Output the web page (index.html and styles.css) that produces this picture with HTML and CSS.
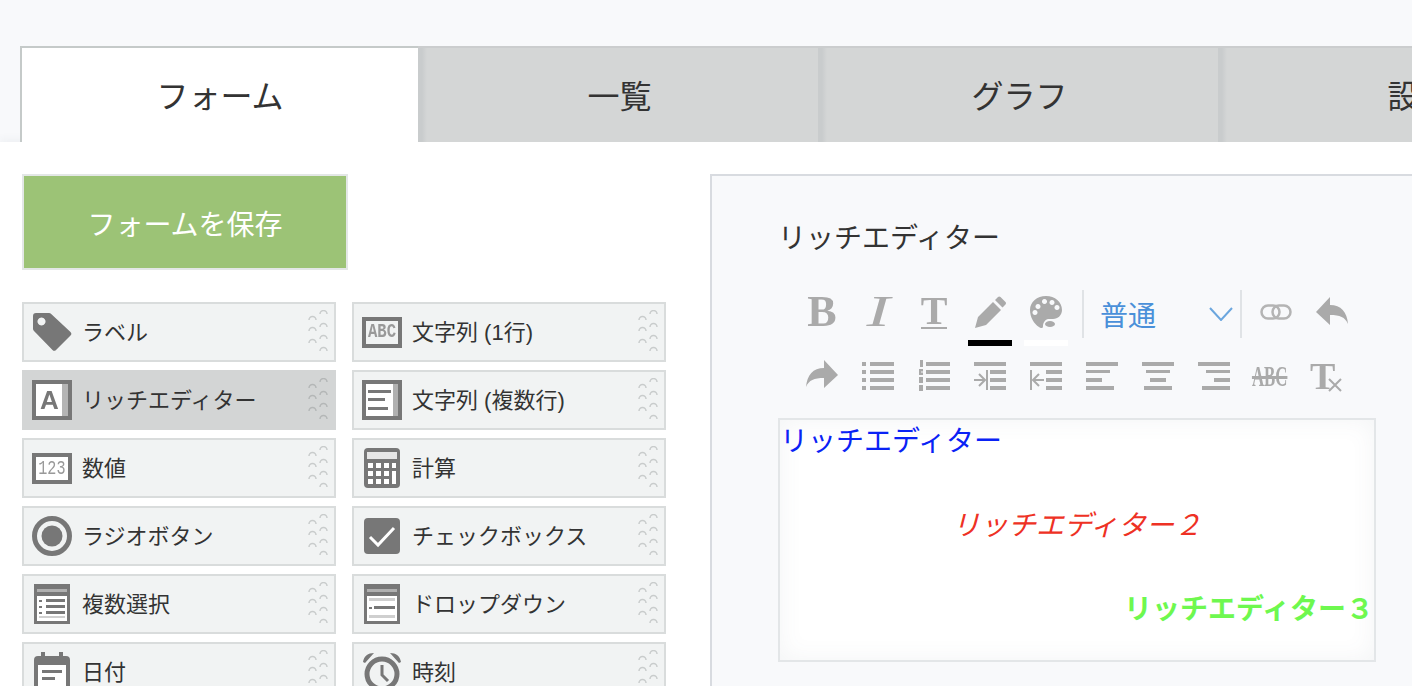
FILE: index.html
```html
<!DOCTYPE html>
<html lang="ja">
<head>
<meta charset="utf-8">
<title>フォーム</title>
<link rel="stylesheet" href="styles.css">
</head>
<body>
<svg class="defs" aria-hidden="true">
  <symbol id="grip" viewBox="0 0 20 44">
    <path d="M1 10a3.500 3.500 0 0 1 7 0M1 21a3.500 3.500 0 0 1 7 0M1 33a3.500 3.500 0 0 1 7 0M12 4a3.500 3.500 0 0 1 7 0M12 17a3.500 3.500 0 0 1 7 0M12 29a3.500 3.500 0 0 1 7 0M12 41a3.500 3.500 0 0 1 7 0"/>
  </symbol>
  <symbol id="tag" viewBox="0 0 40 40">
    <path fill-rule="evenodd" d="M4 1h13a3 3 0 0 1 2.200 1L38.500 20a2.500 2.500 0 0 1 0 3.500L24 38a2.500 2.500 0 0 1-3.500 0L2 19a3 3 0 0 1-1-2V4a3 3 0 0 1 3-3zM9.500 5.500a4 4 0 1 0 .01 0z"/>
  </symbol>
  <symbol id="lines" viewBox="0 0 40 40">
    <path d="M0 0h40v40H0z"/>
    <path class="w" d="M4 4h32v32H4z"/>
    <path class="m" d="M31 4h5v32h-5z"/>
    <path d="M6 10h23v3H6zM6 18h17v3H6zM6 27h20v3H6z"/>
  </symbol>
  <symbol id="calc" viewBox="0 0 40 40">
    <rect x="2" width="36" height="40" rx="4"/>
    <path class="s" d="M5 4h30v7H5z"/>
    <path class="w" d="M6 15h5v5H6zM14 15h5v5h-5zM22 15h5v5h-5zM30 15h4v5h-4zM6 23h5v5H6zM14 23h5v5h-5zM22 23h5v5h-5zM6 31h5v5H6zM14 31h5v5h-5zM22 31h5v5h-5zM30 23h4v13h-4z"/>
  </symbol>
  <symbol id="radio" viewBox="0 0 40 40">
    <circle cx="20" cy="20" r="17.500" class="ring"/>
    <circle cx="20" cy="20" r="10.500"/>
  </symbol>
  <symbol id="check" viewBox="0 0 40 40">
    <rect x="2" y="2" width="36" height="36" rx="4"/>
    <path class="tick" d="M8 21l8 8 16-17"/>
  </symbol>
  <symbol id="multi" viewBox="0 0 40 40">
    <path d="M2 0h36v40H2z"/>
    <path class="m" d="M5 5h30v3H5z"/>
    <path class="w" d="M5 12h30v25H5z"/>
    <path d="M14 15h19v3H14zM14 21h19v3H14zM14 27h19v3H14zM7 16h3v2H7zM7 22h3v2H7zM7 28h3v2H7z"/>
    <path class="l" d="M7 32h26v2H7z"/>
  </symbol>
  <symbol id="drop" viewBox="0 0 40 40">
    <path d="M2 0h36v40H2z"/>
    <path class="m" d="M5 5h30v3H5z"/>
    <path class="w" d="M5 12h30v25H5z"/>
    <path class="l" d="M7 14h26v3H7zM7 31h26v3H7z"/>
    <path d="M12 22h21v3H12zM7 23h3v2H7z"/>
  </symbol>
  <symbol id="cal" viewBox="0 0 40 40">
    <path d="M9 0h4v4h14V0h4v4h3a4 4 0 0 1 4 4v28a4 4 0 0 1-4 4H6a4 4 0 0 1-4-4V8a4 4 0 0 1 4-4h3z"/>
    <path class="w" d="M6 13h28v24H6z"/>
    <path d="M10 18h20v3H10zM10 25h13v3H10z"/>
  </symbol>
  <symbol id="clock" viewBox="0 0 40 40">
    <circle cx="20" cy="22" r="15" class="ring"/>
    <path class="hand" d="M20 13v10l6 6"/>
    <path d="M1 10C2 4 6 1 12 1L3 11zM39 10C38 4 34 1 28 1l9 10z"/>
  </symbol>

  <symbol id="pen" viewBox="0 0 32 32">
    <path d="M1 32l3-11L19 6l8 8L12 29zM21 4l3-3a2 2 0 0 1 2.500 0l5 5a2 2 0 0 1 0 2.500l-3 3z"/>
  </symbol>
  <symbol id="palette" viewBox="0 0 32 32">
    <path fill-rule="evenodd" d="M16 0C7 0 0 6 0 14c0 7 4 14 9 17 3 2 4 1 4-1 0-2 1-6 5-7h5c5 0 9-4 9-9C32 6 25 0 16 0zM8 8a2.500 2.500 0 1 1-.01 0zM14.500 3a2.500 2.500 0 1 1-.01 0zM22 4a2.500 2.500 0 1 1-.01 0zM27 9a2.500 2.500 0 1 1-.01 0zM5 14a2.500 2.500 0 1 1-.01 0z"/>
    <ellipse cx="20" cy="28" rx="5" ry="3"/>
  </symbol>
  <symbol id="link" viewBox="0 0 32 32">
    <rect class="chain" x="1.500" y="9.500" width="18" height="13" rx="6.500"/>
    <rect class="chain" x="12.500" y="9.500" width="18" height="13" rx="6.500"/>
  </symbol>
  <symbol id="undo" viewBox="0 0 32 32">
    <path d="M0 16L14 1v8c11 0 17 7 18 19-3-7-8-9-18-9v10z"/>
  </symbol>
  <symbol id="redo" viewBox="0 0 32 32">
    <path d="M32 15L18 0v8C7 8 1 15 0 27c3-7 8-9 18-9v10z"/>
  </symbol>
  <symbol id="ul" viewBox="0 0 32 32">
    <path d="M0 2h4v4H0zM8 2h24v4H8zM0 10h4v4H0zM8 10h24v4H8zM0 18h4v4H0zM8 18h24v4H8zM0 26h4v4H0zM8 26h24v4H8z"/>
  </symbol>
  <symbol id="ol" viewBox="0 0 32 32">
    <path d="M2 0h3v7H2zM8 2h24v4H8zM1 9h4v2.500H3v1h2V15H1zM8 10h24v4H8zM1 17h4v6H1zM8 18h24v4H8zM1 25h4v6H1zM8 26h24v4H8z"/>
  </symbol>
  <symbol id="indent" viewBox="0 0 32 32">
    <path d="M0 2h32v4H0zM16 10h16v4H16zM16 18h16v4H16zM16 26h16v4H16zM12 10h2v20h-2z"/>
    <path class="arrow" d="M0 20h10M5 14l6 6-6 6"/>
  </symbol>
  <symbol id="outdent" viewBox="0 0 32 32">
    <path d="M0 2h32v4H0zM16 10h16v4H16zM16 18h16v4H16zM16 26h16v4H16zM0 10h2v20H0z"/>
    <path class="arrow" d="M14 20H4M9 14l-6 6 6 6"/>
  </symbol>
  <symbol id="aleft" viewBox="0 0 32 32">
    <path d="M0 2h32v4H0zM0 10h24v3H0zM0 18h16v4H0zM0 26h28v4H0z"/>
  </symbol>
  <symbol id="acenter" viewBox="0 0 32 32">
    <path d="M0 2h32v4H0zM4 10h24v3H4zM8 18h16v4H8zM2 26h28v4H2z"/>
  </symbol>
  <symbol id="aright" viewBox="0 0 32 32">
    <path d="M0 2h32v4H0zM8 10h24v3H8zM16 18h16v4H16zM4 26h28v4H4z"/>
  </symbol>
  <symbol id="cross" viewBox="0 0 16 16">
    <path class="arrow" d="M2 2l12 12M14 2L2 14"/>
  </symbol>
  <symbol id="chev" viewBox="0 0 24 14">
    <path class="chevp" d="M1 1l11 12L23 1"/>
  </symbol>
</svg>

<div class="page">
  <nav class="tabs">
    <div class="tab tab-on">フォーム</div>
    <div class="tab">一覧</div>
    <div class="tab">グラフ</div>
    <div class="tab">設定</div>
  </nav>

  <main class="main">
    <aside class="side">
      <button class="save">フォームを保存</button>
      <div class="items">
        <div class="item"><svg class="ic"><use href="#tag"/></svg><span class="lbl">ラベル</span><svg class="grip"><use href="#grip"/></svg></div>
        <div class="item"><span class="tbox tbox-abc"><span class="t-abc">ABC</span></span><span class="lbl">文字列 (1行)</span><svg class="grip"><use href="#grip"/></svg></div>
        <div class="item item-on"><span class="tbox tbox-a"><span class="t-a">A</span></span><span class="lbl">リッチエディター</span><svg class="grip"><use href="#grip"/></svg></div>
        <div class="item"><svg class="ic"><use href="#lines"/></svg><span class="lbl">文字列 (複数行)</span><svg class="grip"><use href="#grip"/></svg></div>
        <div class="item"><span class="tbox tbox-num"><span class="t-num">123</span></span><span class="lbl">数値</span><svg class="grip"><use href="#grip"/></svg></div>
        <div class="item"><svg class="ic"><use href="#calc"/></svg><span class="lbl">計算</span><svg class="grip"><use href="#grip"/></svg></div>
        <div class="item"><svg class="ic"><use href="#radio"/></svg><span class="lbl">ラジオボタン</span><svg class="grip"><use href="#grip"/></svg></div>
        <div class="item"><svg class="ic"><use href="#check"/></svg><span class="lbl">チェックボックス</span><svg class="grip"><use href="#grip"/></svg></div>
        <div class="item"><svg class="ic"><use href="#multi"/></svg><span class="lbl">複数選択</span><svg class="grip"><use href="#grip"/></svg></div>
        <div class="item"><svg class="ic"><use href="#drop"/></svg><span class="lbl">ドロップダウン</span><svg class="grip"><use href="#grip"/></svg></div>
        <div class="item"><svg class="ic"><use href="#cal"/></svg><span class="lbl">日付</span><svg class="grip"><use href="#grip"/></svg></div>
        <div class="item"><svg class="ic"><use href="#clock"/></svg><span class="lbl">時刻</span><svg class="grip"><use href="#grip"/></svg></div>
      </div>
    </aside>

    <section class="panel">
      <h2 class="title">リッチエディター</h2>
      <div class="toolbar">
        <div class="row">
          <span class="btn"><span class="g g-b">B</span></span>
          <span class="btn"><span class="g g-i">I</span></span>
          <span class="btn"><span class="g g-t">T</span></span>
          <span class="btn"><svg class="ti"><use href="#pen"/></svg><span class="swatch swatch-k"></span></span>
          <span class="btn"><svg class="ti"><use href="#palette"/></svg><span class="swatch swatch-w"></span></span>
          <span class="sel"><span class="sel-t">普通</span><svg class="chev"><use href="#chev"/></svg></span>
          <span class="btn"><svg class="ti"><use href="#link"/></svg></span>
          <span class="btn"><svg class="ti"><use href="#undo"/></svg></span>
        </div>
        <div class="row">
          <span class="btn"><svg class="ti"><use href="#redo"/></svg></span>
          <span class="btn"><svg class="ti"><use href="#ul"/></svg></span>
          <span class="btn"><svg class="ti"><use href="#ol"/></svg></span>
          <span class="btn"><svg class="ti"><use href="#indent"/></svg></span>
          <span class="btn"><svg class="ti"><use href="#outdent"/></svg></span>
          <span class="btn"><svg class="ti"><use href="#aleft"/></svg></span>
          <span class="btn"><svg class="ti"><use href="#acenter"/></svg></span>
          <span class="btn"><svg class="ti"><use href="#aright"/></svg></span>
          <span class="btn"><span class="g g-s">ABC</span></span>
          <span class="btn"><span class="clear"><span class="g g-c">T</span><svg class="cx"><use href="#cross"/></svg></span></span>
        </div>
      </div>
      <div class="editor">
        <p class="ln c-blue">リッチエディター</p>
        <p class="ln">&nbsp;</p>
        <p class="ln c-red">リッチエディター２</p>
        <p class="ln">&nbsp;</p>
        <p class="ln c-green">リッチエディター３</p>
      </div>
    </section>
  </main>
</div>
</body>
</html>
```

FILE: styles.css
```css
* { box-sizing: border-box; }
html, body {
  margin: 0;
  height: 100%;
  overflow: hidden;
  background: #f8f9fb;
  color: #333;
  font-family: "Noto Sans CJK JP", "Liberation Sans", sans-serif;
}
.defs { width: 0; height: 0; display: block; }
.page { height: 686px; overflow: hidden; padding-top: 46px; }

/* tabs */
.tabs { display: flex; margin-left: 20px; width: 1600px; height: 96px; }
.tab {
  flex: none;
  width: 400px;
  display: flex;
  align-items: center;
  justify-content: center;
  font-size: 32px;
  padding: 0 0 2px 3px;
  background: linear-gradient(90deg, #c9cccd 4px, #d4d6d6 9px);
  border-top: 2px solid #cbcdce;
}
.tab-on {
  position: relative;
  z-index: 1;
  width: 398px;
  padding: 0 0 2px;
  background: #fff;
  border-left: 2px solid #c5cac9;
  border-top: 2px solid #c5cac9;
}

/* main */
.main {
  display: flex;
  gap: 44px;
  height: 560px;
  padding: 32px 0 0 22px;
  background: #fff;
  box-shadow: 0 -3px 8px rgba(60, 70, 90, .05);
}
.side { flex: none; width: 644px; }
.save {
  display: block;
  width: 326px;
  height: 96px;
  margin: 0 0 32px;
  padding: 2px 0 0;
  border: 2px solid #e3e7e6;
  background: #9cc376;
  color: #fff;
  font: inherit;
  font-size: 28px;
}
.items { display: grid; grid-template-columns: 314px 314px; gap: 8px 16px; }
.item {
  display: flex;
  align-items: center;
  height: 60px;
  padding: 0 6px 0 8px;
  background: #f1f3f3;
  border: 2px solid #d9dcdc;
  font-size: 22px;
}
.item-on { background: #d3d5d5; border-color: #d3d5d5; }
.lbl {
  margin: 0 0 4px 10px;
  white-space: nowrap;
  font-family: "Liberation Sans", "Noto Sans CJK JP", sans-serif;
}
.grip {
  width: 20px;
  height: 44px;
  margin-left: auto;
  flex: none;
  fill: none;
  stroke: #c9cccc;
  stroke-width: 1.500;
}
.item-on .grip { stroke: #b4b7b7; }

/* item icons */
.ic { width: 40px; height: 40px; flex: none; fill: #777; filter: blur(.4px); }
.w { fill: #fff; }
.m { fill: #b0b0b0; }
.l { fill: #cfcfcf; }
.s { fill: #e6e6e6; }
.ring { fill: none; stroke: #777; stroke-width: 5; }
.tick { fill: none; stroke: #fff; stroke-width: 3; }
.hand { fill: none; stroke: #777; stroke-width: 3; }
.tbox {
  flex: none;
  width: 40px;
  display: flex;
  align-items: center;
  justify-content: center;
  border: 4px solid #777;
  color: #999;
  font-family: "Liberation Mono", monospace;
  filter: blur(.4px);
}
.tbox-a {
  height: 40px;
  background: linear-gradient(90deg, #fff 80%, #b4b4b4 80%);
  padding-right: 5px;
}
.tbox-abc { height: 31px; background: #f1f3f3; }
.tbox-num { height: 31px; background: #fff; }
.t-a { font: bold 26px/1 "Liberation Sans", sans-serif; color: #777; }
.t-abc { display: block; font-size: 20px; font-weight: bold; line-height: 1; transform: scaleX(.78); }
.t-num { display: block; font-size: 21px; line-height: 1; transform: scaleX(.72); }

/* panel */
.panel {
  flex: none;
  width: 900px;
  height: 700px;
  padding: 39px 0 0 66px;
  background: #f8f9fb;
  border: 2px solid #d8dbe0;
}
.title { margin: 0; font-size: 28px; font-weight: 400; line-height: 42px; }
.toolbar { margin-top: 23px; padding-left: 16px; fill: #aaa; }
.row { display: flex; align-items: center; height: 64px; }
.btn {
  flex: none;
  position: relative;
  display: flex;
  align-items: center;
  justify-content: center;
  width: 56px;
  height: 32px;
  color: #aaa;
}
.ti { width: 32px; height: 32px; display: block; filter: blur(.4px); }
.chain { fill: none; stroke: #b4b4b4; stroke-width: 2.500; }
.arrow { fill: none; stroke: #aaa; stroke-width: 2; }
.swatch { position: absolute; left: 6px; top: 44px; width: 44px; height: 6px; }
.swatch-k { background: #000; }
.swatch-w { background: #fff; }
.g { font-family: "Liberation Serif", serif; line-height: 32px; filter: blur(.4px); }
.g-b { font-size: 44px; font-weight: bold; }
.g-i { font-size: 44px; font-style: italic; transform: scaleX(1.6); }
.g-t { font-size: 40px; font-weight: bold; border-bottom: 2px solid #aaa; }
.g-s { font-size: 30px; font-weight: bold; text-decoration: line-through; transform: scaleX(.56); }
.g-c { font-size: 38px; font-weight: bold; }
.clear { position: relative; display: block; width: 32px; height: 32px; text-align: left; }
.cx { position: absolute; right: -1px; bottom: -1px; width: 16px; height: 16px; }
.sel {
  flex: none;
  display: flex;
  align-items: center;
  width: 160px;
  height: 48px;
  margin: 4px 6px 0 8px;
  padding-left: 16px;
  border-left: 2px solid #e0e3e6;
  border-right: 2px solid #e0e3e6;
  color: #4a90d9;
  font-size: 28px;
}
.chev { width: 24px; height: 14px; margin-left: auto; margin-right: 7px; }
.chevp { fill: none; stroke: #6ba6de; stroke-width: 2; }

/* editor */
.editor {
  width: 598px;
  height: 244px;
  margin-top: 10px;
  padding: 0;
  background: #fff;
  border: 2px solid #e3e6e8;
  box-shadow: inset 0 0 24px rgba(90, 100, 110, .07);
  font-size: 28px;
}
.ln { margin: 0; height: 42px; line-height: 39px; white-space: nowrap; }
.c-blue { color: #0a22f5; }
.c-red { color: #ee3124; font-style: italic; text-align: center; }
.c-green { color: #6ef84f; font-weight: bold; text-align: right; }
```
